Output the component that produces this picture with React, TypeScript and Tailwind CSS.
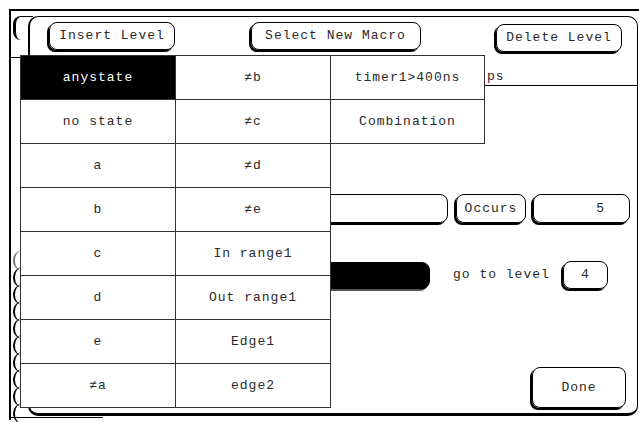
import clsx from "clsx";
import type { ReactNode } from "react";

const menuLeft = ["anystate", "no state", "a", "b", "c", "d", "e", "≠a"];
const menuMid = ["≠b", "≠c", "≠d", "≠e", "In range1", "Out range1", "Edge1", "edge2"];
const menuRight = ["timer1>400ns", "Combination"];

function Btn({ children, className }: { children?: ReactNode; className?: string }) {
  return (
    <div
      className={clsx(
        "flex items-center justify-center rounded-[8px] border border-black shadow-[-2px_2px_0_0_#000]",
        className,
      )}
    >
      {children}
    </div>
  );
}

function Cell({ label, active }: { label: string; active?: boolean }) {
  return (
    <div
      className={clsx(
        "flex h-[44px] items-center justify-center border-b border-r border-[#333]",
        active ? "bg-black text-white" : "bg-white text-[#2a2a2a]",
      )}
    >
      {label}
    </div>
  );
}

export default function App() {
  return (
    <div className="relative h-[422px] w-[639px] overflow-hidden bg-white pl-[9px] pt-[9px] font-[Liberation_Mono,monospace] text-[13px] tracking-[1px] text-[#2a2a2a]">
      {/* screen behind the dialog */}
      <div className="h-[411px] w-[630px] border-l-2 border-t-2 border-black">
        <div className="mt-[46px] h-px w-[11px] bg-black" />
        <div className="ml-[2px] mt-[192px] flex w-[12px] flex-col">
          {[0, 1, 2, 3, 4, 5, 6, 7, 8, 9].map((i) => (
            <div
              key={i}
              className={clsx(
                "-mb-[4px] h-[21px] rounded-l-[10px] border-l-2",
                i === 0 ? "border-[#777]" : "border-black",
              )}
            />
          ))}
        </div>
      </div>
      <div className="absolute left-[9px] top-[417px] h-px w-[94px] bg-black" />
      <div className="absolute left-[13px] top-[16px] h-[24px] w-[20px] rounded-l-[8px] border-l-[3px] border-t border-black" />

      {/* dialog */}
      <div className="absolute left-[28px] top-[16px] flex h-[400px] w-[610px] flex-col rounded-[10px] border border-b-[3px] border-l-2 border-black bg-white">
        <div className="flex justify-between pl-[19px] pr-[15px] pt-[5px]">
          <Btn className="h-[28px] w-[126px]">Insert Level</Btn>
          <Btn className="h-[28px] w-[170px]">Select New Macro</Btn>
          <Btn className="mt-[2px] h-[28px] w-[126px]">Delete Level</Btn>
        </div>
        <div className="ml-[453px] mt-[19px] h-[15px] border-b border-black pl-[4px] leading-[12px]">ps</div>
        <div className="mt-[108px] flex items-center">
          <Btn className="ml-[210px] h-[29px] w-[208px]" />
          <Btn className="ml-[8px] h-[29px] w-[70px]">Occurs</Btn>
          <Btn className="ml-[7px] h-[29px] w-[97px] justify-end pr-[24px]">5</Btn>
        </div>
        <div className="mt-[38px] flex items-center">
          <Btn className="ml-[200px] h-[27px] w-[200px] bg-black shadow-[-2px_2px_0_0_#555]" />
          <div className="ml-[23px] w-[110px]">go to level</div>
          <Btn className="h-[28px] w-[45px]">4</Btn>
        </div>
        <div className="mt-[78px] flex">
          <Btn className="ml-[502px] h-[41px] w-[94px]">Done</Btn>
        </div>
      </div>

      {/* popup menu */}
      <div className="absolute left-[20px] top-[55px] flex items-start border-l border-t border-[#333]">
        <div className="flex w-[155px] flex-col">
          {menuLeft.map((m, i) => (
            <Cell key={m} label={m} active={i === 0} />
          ))}
        </div>
        <div className="flex w-[155px] flex-col">
          {menuMid.map((m) => (
            <Cell key={m} label={m} />
          ))}
        </div>
        <div className="flex w-[154px] flex-col">
          {menuRight.map((m) => (
            <Cell key={m} label={m} />
          ))}
        </div>
      </div>
    </div>
  );
}
